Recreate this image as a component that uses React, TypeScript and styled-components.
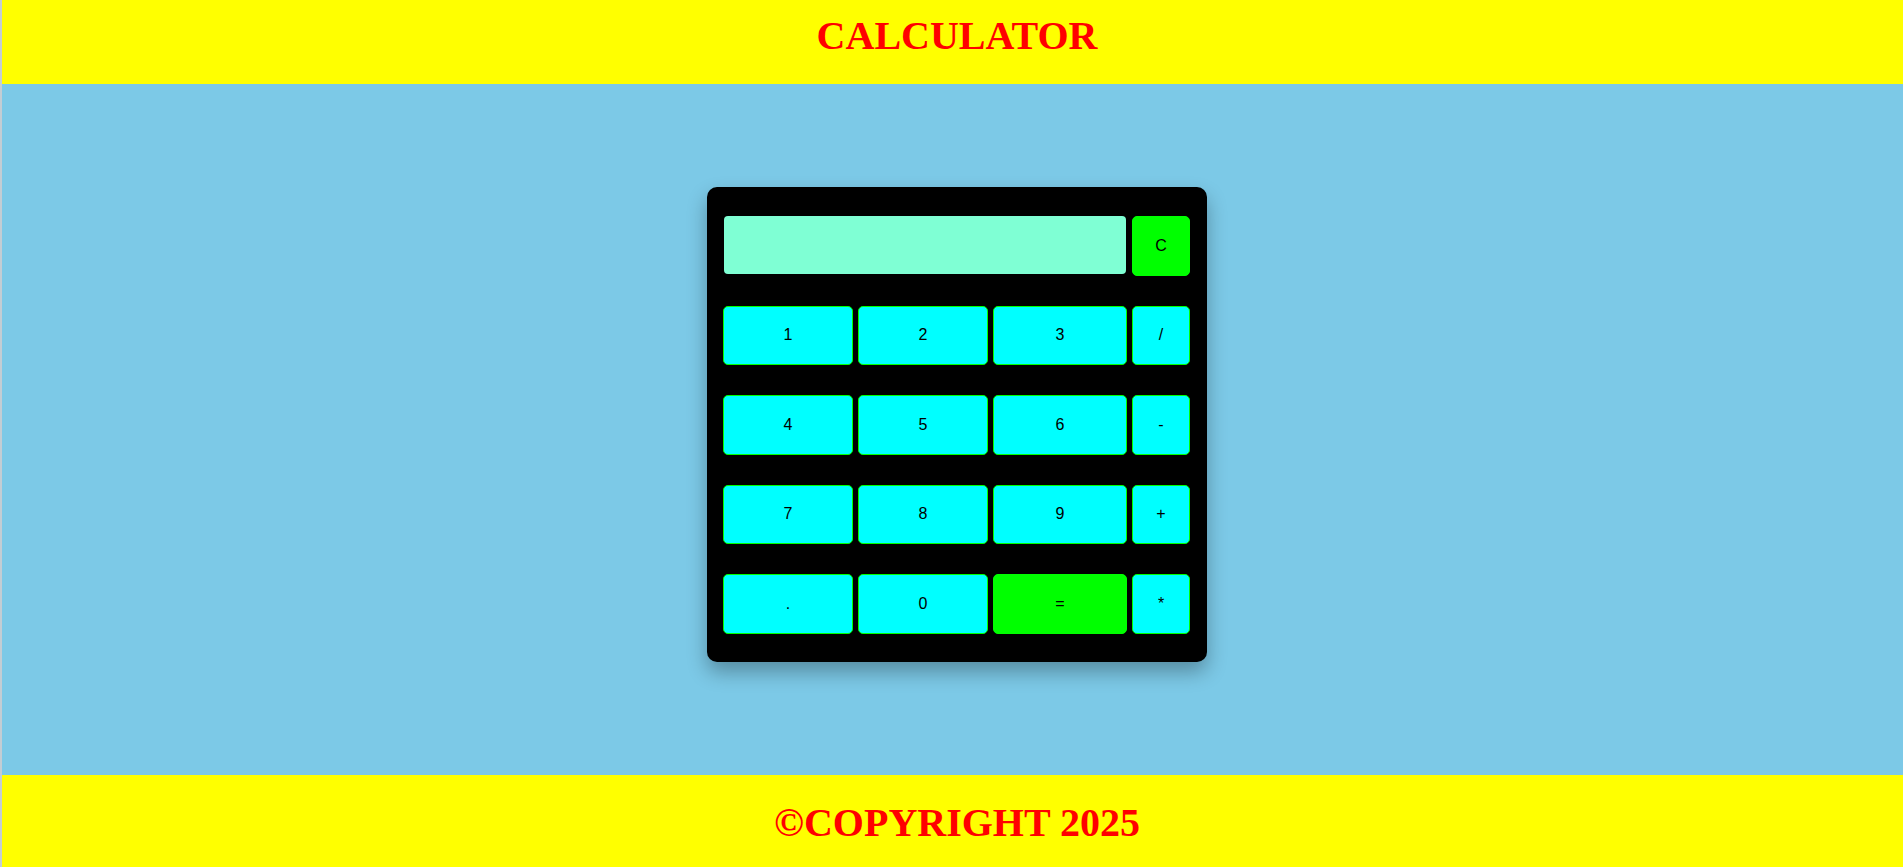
import React from 'react';
import styled, { createGlobalStyle } from 'styled-components';

const GlobalStyle = createGlobalStyle`
  html, body {
    margin: 0;
    padding: 0;
    overflow: hidden;
  }
  body {
    font-family: "Liberation Serif", "Times New Roman", serif;
  }
`;

const Page = styled.div`
  width: calc(100% + 7px);
  border-left: 2px solid #c3cdd4;
  display: flex;
  flex-direction: column;
`;

const Banner = styled.div<{ $top: number; $height: number }>`
  background: #ffff00;
  height: ${p => p.$height}px;
  padding-top: ${p => p.$top}px;
  box-sizing: border-box;
  text-align: center;
`;

const BannerText = styled.h1`
  margin: 0;
  color: #ff0000;
  font-family: "Liberation Serif", "Times New Roman", serif;
  font-weight: bold;
  font-size: 40px;
  line-height: normal;
`;

const Main = styled.main`
  background: #7cc9e7;
  height: 691px;
  padding-top: 103px;
  box-sizing: border-box;
  display: flex;
  justify-content: center;
  align-items: flex-start;
`;

const Calculator = styled.div`
  width: 500px;
  height: 475px;
  box-sizing: border-box;
  padding: 29px 16px;
  background: #000;
  border-radius: 10px;
  box-shadow: 0 10px 20px rgba(0, 0, 0, 0.3);
`;

const Keypad = styled.div`
  display: grid;
  grid-template-columns: 130px 130px 134px 58px;
  grid-template-rows: repeat(5, 59.5px);
  column-gap: 5px;
  row-gap: 30px;
`;

const Display = styled.input`
  grid-column: span 3;
  height: 58px;
  margin: 0 1px;
  box-sizing: border-box;
  border: none;
  border-radius: 4px;
  background: #7fffd4;
  outline: none;
  font-family: "Liberation Sans", Arial, sans-serif;
  font-size: 24px;
  padding: 0 10px;
`;

const Key = styled.button<{ $accent?: boolean }>`
  height: 100%;
  width: 100%;
  box-sizing: border-box;
  border: 1px solid #00ff00;
  border-radius: 5px;
  background: ${p => (p.$accent ? '#00ff00' : '#00ffff')};
  color: #000;
  font-family: "Liberation Sans", Arial, sans-serif;
  font-size: 16px;
  padding: 0;
  cursor: pointer;
`;

const rows = [
  ['1', '2', '3', '/'],
  ['4', '5', '6', '-'],
  ['7', '8', '9', '+'],
  ['.', '0', '=', '*'],
];

export default function App() {
  const [value, setValue] = React.useState('');

  const press = (k: string) => {
    if (k === '=') {
      try {
        // eslint-disable-next-line no-new-func
        setValue(String(Function(`return (${value})`)()));
      } catch {
        setValue('Error');
      }
      return;
    }
    setValue(v => v + k);
  };

  return (
    <>
      <GlobalStyle />
      <Page>
        <Banner $top={12} $height={84}>
          <BannerText>CALCULATOR</BannerText>
        </Banner>
        <Main>
          <Calculator>
            <Keypad>
              <Display value={value} readOnly />
              <Key $accent onClick={() => setValue('')}>C</Key>
              {rows.flat().map(k => (
                <Key key={k} $accent={k === '='} onClick={() => press(k)}>
                  {k}
                </Key>
              ))}
            </Keypad>
          </Calculator>
        </Main>
        <Banner $top={24} $height={92}>
          <BannerText as="h2">©COPYRIGHT 2025</BannerText>
        </Banner>
      </Page>
    </>
  );
}
